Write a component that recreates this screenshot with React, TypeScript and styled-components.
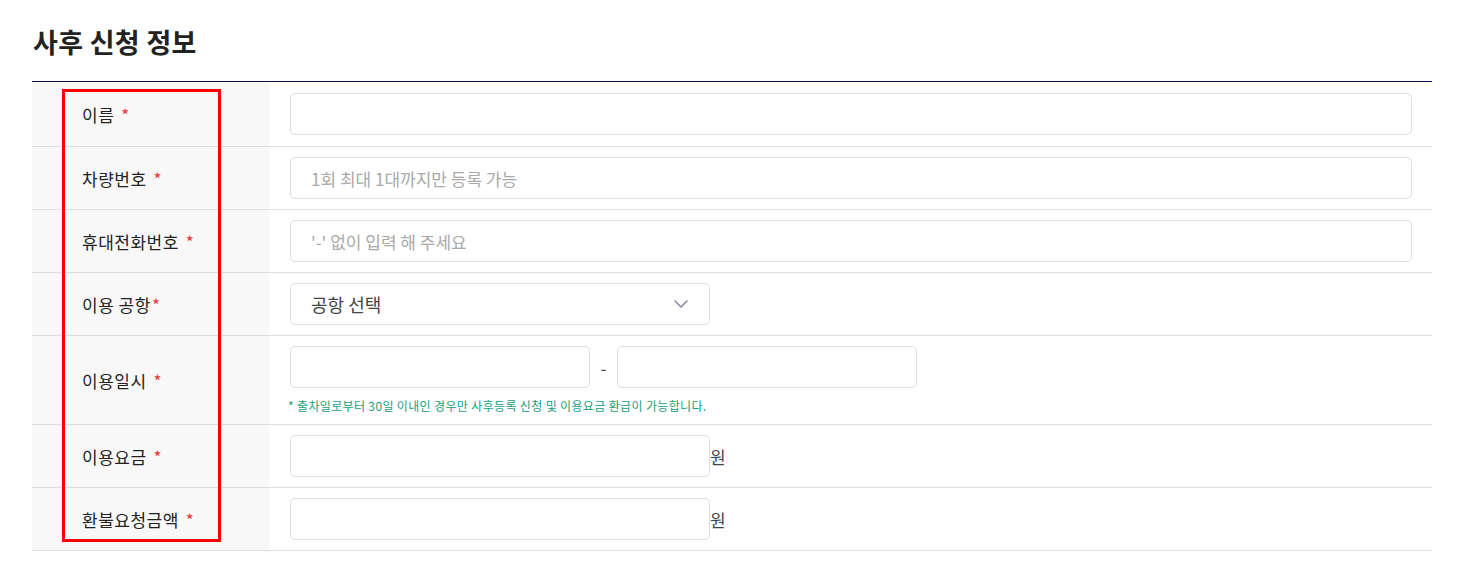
import React from "react";
import styled, { createGlobalStyle } from "styled-components";

const Global = createGlobalStyle`
  html, body { margin: 0; padding: 0; background: #fff; }
  body { font-family: "Noto Sans CJK KR", "Noto Sans", sans-serif; color: #222; }
  * { box-sizing: border-box; }
`;

const Page = styled.div`
  width: 1400px;
  margin-left: 32px;
  padding-top: 22px;
`;

const Title = styled.h2`
  margin: 0 0 0 1px;
  font-size: 27px;
  font-weight: 700;
  letter-spacing: 0.3px;
  line-height: 40px;
  color: #222;
`;

const Table = styled.div`
  position: relative;
  margin-top: 19px;
  border-top: 1px solid #0b0c4f;
`;

const Row = styled.div<{ $first?: boolean }>`
  display: grid;
  grid-template-columns: 238px 1fr;
  border-bottom: 1px solid #dedede;
  min-height: ${(p) => (p.$first ? "65px" : "auto")};
`;

const Label = styled.div`
  background: #f8f8f8;
  display: flex;
  align-items: center;
  padding-left: 50px;
  font-size: 17px;
  letter-spacing: 0.5px;
  color: #222;
`;

const Star = styled.span<{ $gap?: boolean }>`
  color: #e8383d;
  margin-left: ${(p) => (p.$gap ? "7px" : "1px")};
`;

const Cell = styled.div`
  padding: 10px 20px;
  display: flex;
  flex-direction: column;
  justify-content: center;
`;

const Line = styled.div`
  display: flex;
  align-items: center;
`;

const Input = styled.input<{ $w?: number }>`
  height: 42px;
  width: ${(p) => (p.$w ? `${p.$w}px` : "100%")};
  border: 1px solid #dddddd;
  border-radius: 5px;
  padding: 0 20px;
  font-family: inherit;
  font-size: 17px;
  letter-spacing: 0px;
  color: #333;
  outline: none;
  &::placeholder { color: #a9a9a9; }
`;

const SelectBox = styled.div`
  width: 420px;
  height: 42px;
  border: 1px solid #dddddd;
  border-radius: 5px;
  display: flex;
  align-items: center;
  justify-content: space-between;
  padding: 0 21px 0 20px;
  font-size: 18px;
  letter-spacing: 0px;
  color: #444;
`;

const Dash = styled.span`
  width: 27px;
  text-align: center;
  font-size: 17px;
  color: #444;
`;

const Note = styled.p`
  margin: 10px 0 0 -2px;
  font-size: 12px;
  letter-spacing: 0.35px;
  color: #17a07a;
  line-height: 16px;
`;

const Unit = styled.span`
  font-size: 17px;
  color: #444;
  letter-spacing: 0.5px;
`;

const Highlight = styled.div`
  position: absolute;
  left: 30px;
  top: 7px;
  width: 159px;
  height: 453px;
  border: 3px solid #ff0000;
  pointer-events: none;
`;

const Chevron = () => (
  <svg width="14" height="8" viewBox="0 0 14 8" fill="none">
    <path d="M1 1L7 7L13 1" stroke="#8a8fa3" strokeWidth="1.6" strokeLinecap="round" strokeLinejoin="round" />
  </svg>
);

export default function App() {
  return (
    <>
      <Global />
      <Page>
        <Title>사후 신청 정보</Title>
        <Table>
          <Row $first>
            <Label>이름<Star $gap>*</Star></Label>
            <Cell><Input /></Cell>
          </Row>
          <Row>
            <Label>차량번호<Star $gap>*</Star></Label>
            <Cell><Input placeholder="1회 최대 1대까지만 등록 가능" /></Cell>
          </Row>
          <Row>
            <Label>휴대전화번호<Star $gap>*</Star></Label>
            <Cell><Input placeholder="'-' 없이 입력 해 주세요" /></Cell>
          </Row>
          <Row>
            <Label>이용 공항<Star>*</Star></Label>
            <Cell>
              <SelectBox>
                <span>공항 선택</span>
                <Chevron />
              </SelectBox>
            </Cell>
          </Row>
          <Row>
            <Label>이용일시<Star $gap>*</Star></Label>
            <Cell>
              <Line>
                <Input $w={300} />
                <Dash>-</Dash>
                <Input $w={300} />
              </Line>
              <Note>* 출차일로부터 30일 이내인 경우만 사후등록 신청 및 이용요금 환급이 가능합니다.</Note>
            </Cell>
          </Row>
          <Row>
            <Label>이용요금<Star $gap>*</Star></Label>
            <Cell>
              <Line>
                <Input $w={420} />
                <Unit>원</Unit>
              </Line>
            </Cell>
          </Row>
          <Row>
            <Label>환불요청금액<Star $gap>*</Star></Label>
            <Cell>
              <Line>
                <Input $w={420} />
                <Unit>원</Unit>
              </Line>
            </Cell>
          </Row>
          <Highlight />
        </Table>
      </Page>
    </>
  );
}
